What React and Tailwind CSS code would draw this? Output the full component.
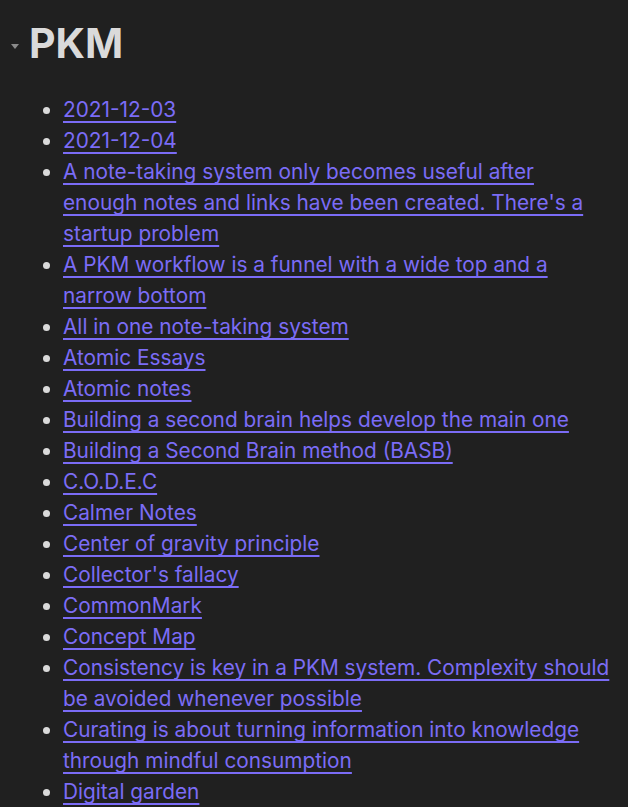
import React from "react";

const notes = [
  "2021-12-03",
  "2021-12-04",
  "A note-taking system only becomes useful after enough notes and links have been created. There's a startup problem",
  "A PKM workflow is a funnel with a wide top and a narrow bottom",
  "All in one note-taking system",
  "Atomic Essays",
  "Atomic notes",
  "Building a second brain helps develop the main one",
  "Building a Second Brain method (BASB)",
  "C.O.D.E.C",
  "Calmer Notes",
  "Center of gravity principle",
  "Collector's fallacy",
  "CommonMark",
  "Concept Map",
  "Consistency is key in a PKM system. Complexity should be avoided whenever possible",
  "Curating is about turning information into knowledge through mindful consumption",
  "Digital garden",
  "Digital gardening",
];

const App = () => {
  return (
    <div
      className="min-h-screen h-[807px] overflow-hidden bg-[#202020] text-[#dadada]"
      style={{ fontFamily: "Inter, 'Noto Sans', sans-serif" }}
    >
      <div className="flex items-center pt-[14px] pl-[11px]">
        <span className="w-0 h-0 mr-[10px] mt-[6px] border-l-[4px] border-r-[4px] border-t-[5px] border-l-transparent border-r-transparent border-t-[#8a8a8a]" />
        <h1 className="text-[41px] font-bold leading-[58px] text-[#dadada]">PKM</h1>
      </div>
      <ul className="mt-[22px] pl-[63px] pr-[17px] list-disc marker:text-[#dadada] text-[20.8px] leading-[31px]">
        {notes.map((n) => (
          <li key={n}>
            <a href="#" className="text-[#7b6cf6] underline underline-offset-[4px] decoration-[2px]">
              {n}
            </a>
          </li>
        ))}
      </ul>
    </div>
  );
};

export default App;
